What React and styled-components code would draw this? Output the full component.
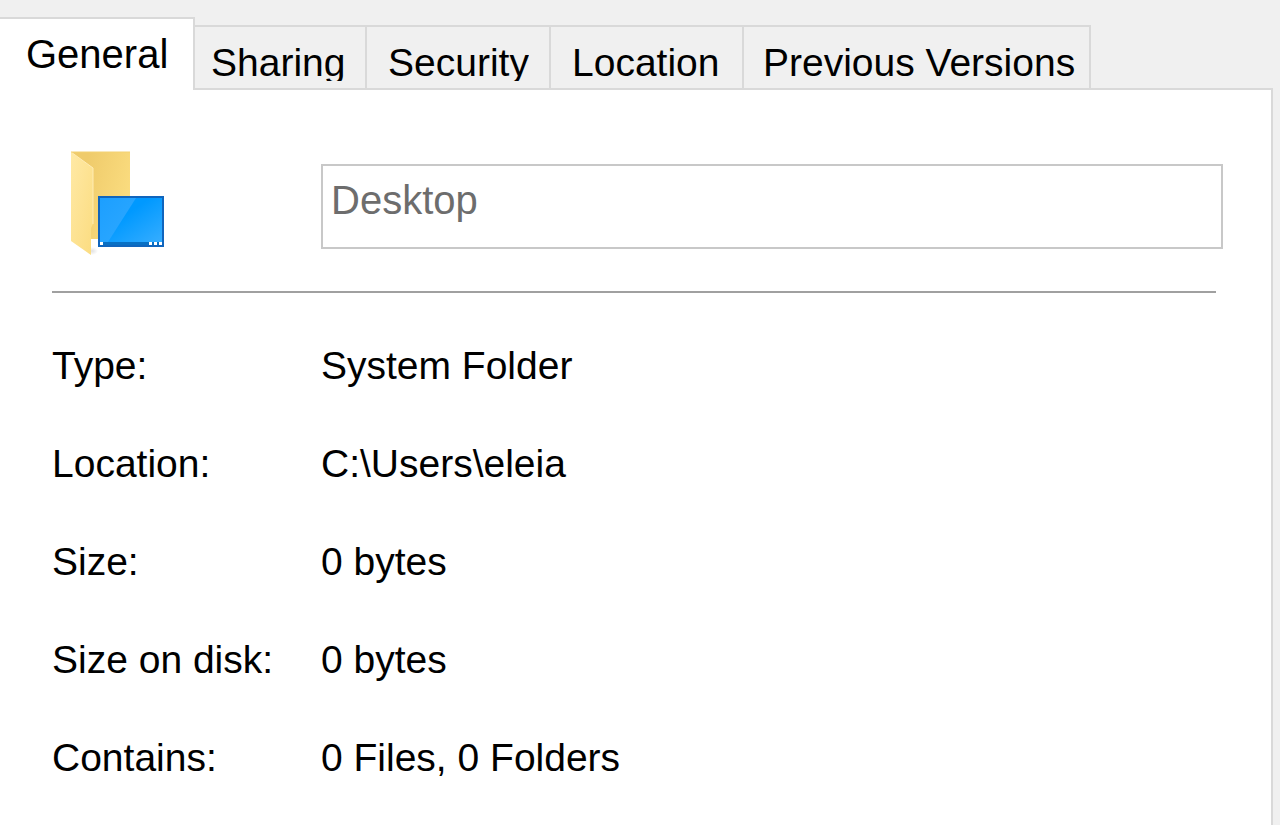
import React, { useState } from 'react';
import styled, { createGlobalStyle } from 'styled-components';

const GlobalStyle = createGlobalStyle`
  * { box-sizing: border-box; }
  body {
    margin: 0;
    background: #f0f0f0;
    color: #000;
    font-family: "Liberation Sans", Arial, sans-serif;
    font-size: 39px;
  }
`;

const Dialog = styled.main`
  display: flex;
  flex-direction: column;
  min-height: 100vh;
  padding: 17px 7px 0 0;
`;

const TabList = styled.div`
  display: flex;
  align-items: flex-end;
`;

const Tab = styled.button`
  position: relative;
  z-index: ${(p) => (p.$active ? 1 : 0)};
  flex: none;
  display: flex;
  align-items: flex-start;
  width: ${(p) => p.$width}px;
  height: ${(p) => (p.$active ? 73 : 63)}px;
  margin: 0 0 ${(p) => (p.$active ? -2 : 0)}px;
  padding: ${(p) => (p.$active ? 13 : 14)}px 0 0 ${(p) => p.$inset}px;
  border: 0 solid #d9d9d9;
  border-width: 2px 2px 0 0;
  background: ${(p) => (p.$active ? '#fff' : '#f0f0f0')};
  color: inherit;
  font-family: inherit;
  font-size: ${(p) => (p.$active ? 40 : 39)}px;
  line-height: 44px;
  text-align: left;
  white-space: nowrap;
`;

const TabLabel = styled.span`
  height: ${(p) => (p.$active ? 'auto' : '40px')};
  overflow: ${(p) => (p.$active ? 'visible' : 'hidden')};
`;

const Panel = styled.section`
  flex: 1;
  padding: 58px 48px 18px 52px;
  border: solid #d9d9d9;
  border-width: 2px 2px 0 0;
  background: #fff;
`;

const Header = styled.div`
  display: grid;
  grid-template-columns: 269px 1fr;
  align-items: center;
`;

const FolderIcon = styled.svg`
  display: block;
  width: 100px;
  height: 117px;
  margin-left: 16px;
`;

const NameInput = styled.input`
  width: 100%;
  height: 85px;
  padding: 10px 8px 23px;
  border: 2px solid #c8c8c8;
  border-radius: 0;
  background: #fff;
  color: #6d6d6d;
  font-family: inherit;
  font-size: 40px;
  outline: none;
`;

const Divider = styled.hr`
  height: 2px;
  margin: 26px 7px 24px 0;
  border: 0;
  background: #a0a0a0;
`;

const Details = styled.dl`
  margin: 0;
`;

const DetailRow = styled.div`
  display: grid;
  grid-template-columns: 269px 1fr;
  line-height: 98px;
`;

const Term = styled.dt`
  white-space: nowrap;
`;

const Value = styled.dd`
  margin: 0;
`;

const tabs = [
  { name: 'General', width: 195, inset: 26 },
  { name: 'Sharing', width: 172, inset: 16 },
  { name: 'Security', width: 184, inset: 21 },
  { name: 'Location', width: 193, inset: 21 },
  { name: 'Previous Versions', width: 347, inset: 19 },
];

const details = [
  ['Type:', 'System Folder'],
  ['Location:', 'C:\\Users\\eleia'],
  ['Size:', '0 bytes'],
  ['Size on disk:', '0 bytes'],
  ['Contains:', '0 Files, 0 Folders'],
];

function DesktopFolder() {
  return (
    <FolderIcon viewBox="0 0 100 117" aria-hidden="true">
      <defs>
        <linearGradient id="back" x1="0" y1="0.2" x2="1" y2="0.6">
          <stop offset="0.2" stopColor="#efcb6b" />
          <stop offset="1" stopColor="#fbdd80" />
        </linearGradient>
        <linearGradient id="front" x1="0" y1="0" x2="1" y2="1">
          <stop offset="0" stopColor="#ffe9a5" />
          <stop offset="1" stopColor="#fbdc80" />
        </linearGradient>
        <linearGradient id="screen" x1="0" y1="0" x2="1" y2="1">
          <stop offset="0.4" stopColor="#0099ff" />
          <stop offset="1" stopColor="#36adff" />
        </linearGradient>
        <linearGradient id="glare" x1="0" y1="0" x2="1" y2="1">
          <stop offset="0" stopColor="#1c9fff" />
          <stop offset="1" stopColor="#2fa9ff" />
        </linearGradient>
        <radialGradient id="shade">
          <stop offset="0" stopColor="#888" stopOpacity="0.25" />
          <stop offset="1" stopColor="#888" stopOpacity="0" />
        </radialGradient>
      </defs>
      <ellipse cx="24" cy="103" rx="6" ry="4" fill="url(#shade)" />
      <path d="M3 4H62V91H3Z" fill="url(#back)" />
      <path d="M3 4L25 20V76L23 80V107L3 93Z" fill="url(#front)" />
      <path d="M3 4L25 20V76" fill="none" stroke="#ffecb4" strokeWidth="1" />
      <path d="M3 4H62" stroke="#f3d173" strokeWidth="1" />
      <rect x="30" y="48" width="66" height="51" fill="#1065bd" />
      <rect x="32" y="50" width="62" height="44" fill="url(#screen)" />
      <path d="M32 50H68L40 94H32Z" fill="url(#glare)" />
      <rect x="32" y="94" width="62" height="3" fill="#0870c4" />
      <g fill="#fff">
        <rect x="32" y="94" width="3" height="3" />
        <rect x="81" y="94" width="3" height="3" />
        <rect x="86" y="94" width="3" height="3" />
        <rect x="91" y="94" width="3" height="3" />
      </g>
    </FolderIcon>
  );
}

export default function App() {
  const [name, setName] = useState('Desktop');
  return (
    <>
      <GlobalStyle />
      <Dialog>
        <TabList role="tablist">
          {tabs.map((tab, i) => (
            <Tab
              key={tab.name}
              type="button"
              role="tab"
              aria-selected={i === 0}
              $active={i === 0}
              $width={tab.width}
              $inset={tab.inset}
            >
              <TabLabel $active={i === 0}>{tab.name}</TabLabel>
            </Tab>
          ))}
        </TabList>
        <Panel role="tabpanel" aria-label="General">
          <Header>
            <DesktopFolder />
            <NameInput
              aria-label="Folder name"
              value={name}
              onChange={(e) => setName(e.target.value)}
            />
          </Header>
          <Divider />
          <Details>
            {details.map(([term, value]) => (
              <DetailRow key={term}>
                <Term>{term}</Term>
                <Value>{value}</Value>
              </DetailRow>
            ))}
          </Details>
        </Panel>
      </Dialog>
    </>
  );
}
